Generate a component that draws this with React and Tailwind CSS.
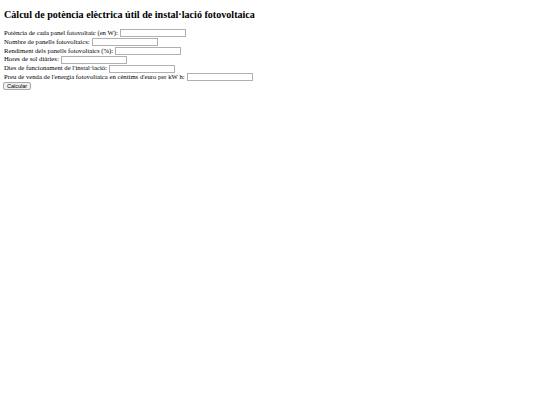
import React from 'react';

const fields = [
  'Potència de cada panel fotovoltaic (en W):',
  'Nombre de panells fotovoltaics:',
  'Rendiment dels panells fotovoltaics (%):',
  'Hores de sol diàries:',
  "Dies de funcionament de l'instal·lació:",
  "Preu de venda de l'energia fotovoltaica en cèntims d'euro per kW h:",
];

const App = () => {
  return (
    <div className="min-h-screen bg-white px-[4px] text-black" style={{ fontFamily: '"Liberation Serif", serif' }}>
      <h1 className="pt-[9px] text-[10.1px] font-bold leading-[12px] mb-[8px]">
        Càlcul de potència elèctrica útil de instal·lació fotovoltaica
      </h1>
      <form className="text-[6.7px] leading-[8.8px]">
        {fields.map((label) => (
          <div key={label} className="flex items-center h-[8.8px]">
            <span>{label}</span>
            <input
              type="text"
              className="ml-[2px] w-[66px] h-[8px] border border-[#b0b0b0] bg-white"
            />
          </div>
        ))}
        <button
          type="button"
          className="-ml-[1px] h-[8.5px] px-[3px] border border-[#a8a8a8] rounded-[2px] bg-[#efefef] text-[5.5px] leading-[6px]"
          style={{ fontFamily: '"Liberation Sans", sans-serif' }}
        >
          Calcular
        </button>
      </form>
    </div>
  );
};

export default App;
